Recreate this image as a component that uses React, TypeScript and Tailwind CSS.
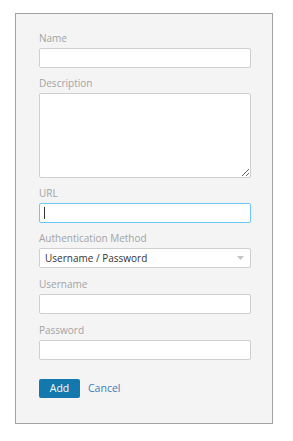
import React from "react";

function Label({ children }: { children: React.ReactNode }) {
  return (
    <div className="text-[10px] leading-[15px] text-[#a3a3a3] mb-[2px]">{children}</div>
  );
}

export default function App() {
  return (
    <div
      className="w-[293px] h-[441px] bg-white pt-[13px] pl-[15px]"
      style={{ fontFamily: '"Open Sans", sans-serif' }}
    >
      <div className="w-[258px] h-[411px] border border-[#a3a3a3] bg-[#f4f4f4] pt-[17px] pl-[23px]">
        <div className="w-[212px] flex flex-col">
          <Label>Name</Label>
          <input className="h-[20px] w-full bg-white border border-[#cfcfcf] rounded-[2px] outline-none" />
          <div className="h-[8px]" />
          <Label>Description</Label>
          <textarea className="h-[85px] w-full bg-white border border-[#cfcfcf] rounded-[2px] outline-none block resize-y" />
          <div className="h-[8px]" />
          <Label>URL</Label>
          <div className="h-[20px] w-full bg-white border border-[#6ec6f7] rounded-[2px] flex items-center pl-[4px]">
            <span className="w-px h-[12px] bg-[#333]" />
          </div>
          <div className="h-[8px]" />
          <Label>Authentication Method</Label>
          <div className="h-[20px] w-full bg-white border border-[#cfcfcf] rounded-[2px] flex items-center justify-between pl-[5px] pr-[6px]">
            <span className="text-[10px] text-[#333] leading-none">Username / Password</span>
            <svg width="7" height="4" viewBox="0 0 7 4">
              <path d="M0 0 L7 0 L3.5 4 Z" fill="#c4c4c4" />
            </svg>
          </div>
          <div className="h-[9px]" />
          <Label>Username</Label>
          <input className="h-[20px] w-full bg-white border border-[#cfcfcf] rounded-[2px] outline-none" />
          <div className="h-[9px]" />
          <Label>Password</Label>
          <input type="password" className="h-[20px] w-full bg-white border border-[#cfcfcf] rounded-[2px] outline-none" />
          <div className="h-[19px]" />
          <div className="flex items-center gap-[8px]">
            <button className="h-[19px] w-[41px] bg-[#1378ad] text-white text-[10.5px] rounded-[2px] leading-none">
              Add
            </button>
            <span className="text-[10.5px] text-[#3b7dc0]">Cancel</span>
          </div>
        </div>
      </div>
    </div>
  );
}
